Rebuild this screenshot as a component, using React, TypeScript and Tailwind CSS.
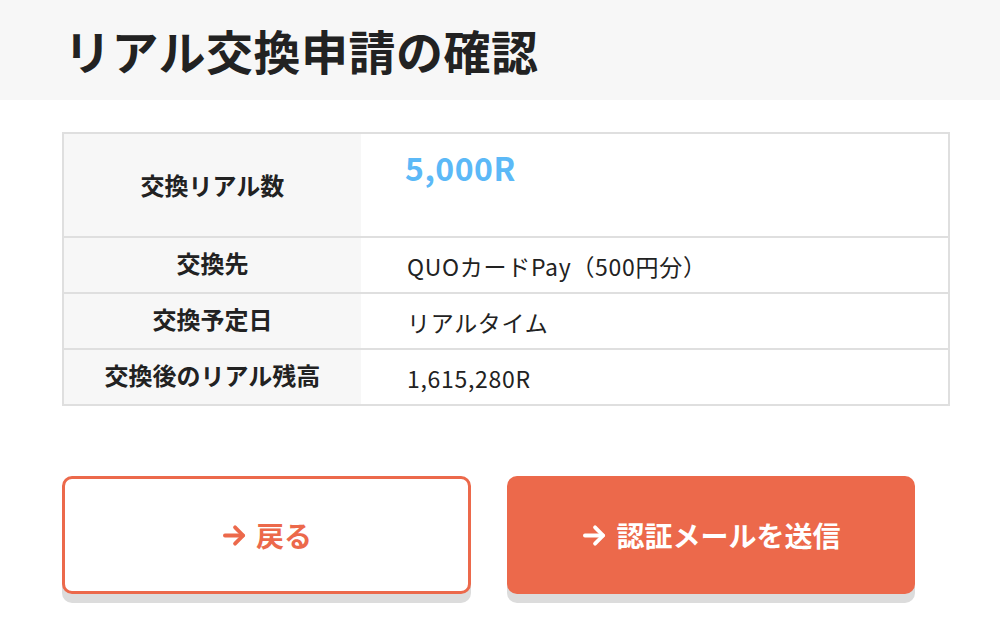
import React from "react";

const font = { fontFamily: '"Noto Sans CJK JP", "Noto Sans", sans-serif' };

function Arrow({ className }: { className?: string }) {
  return (
    <svg
      viewBox="0 0 24 24"
      className={className}
      fill="none"
      stroke="currentColor"
      strokeWidth={3.4}
      strokeLinecap="round"
      strokeLinejoin="round"
    >
      <path d="M3.5 12h16" />
      <path d="M12.5 4.8l7.2 7.2-7.2 7.2" />
    </svg>
  );
}

const rows = [
  { label: "交換先", value: "QUOカードPay（500円分）" },
  { label: "交換予定日", value: "リアルタイム" },
  { label: "交換後のリアル残高", value: "1,615,280R" },
];

export default function App() {
  return (
    <div className="w-[1000px] h-[639px] bg-white text-[#222]" style={font}>
      <div className="h-[100px] bg-[#f7f7f7] flex items-center pl-[64px]">
        <h1 className="text-[47px] font-bold leading-none tracking-[0.5px] pb-[2px]">リアル交換申請の確認</h1>
      </div>

      <div className="pl-[62px] pr-[50px] pt-[32px]">
        <div className="border-2 border-[#dfdfdf]">
          <div className="flex h-[102px]">
            <div className="w-[297px] bg-[#f7f7f7] flex items-center justify-center text-[24px] font-bold">
              交換リアル数
            </div>
            <div className="flex-1 pl-[44px] pt-[9px] text-[32px] font-bold text-[#5cb9f7] tracking-[0.5px] leading-normal">
              5,000R
            </div>
          </div>
          {rows.map((r) => (
            <div key={r.label} className="flex h-[56px] border-t-2 border-[#dfdfdf]">
              <div className="w-[297px] bg-[#f7f7f7] flex items-center justify-center text-[24px] font-bold pb-[4px]">
                {r.label}
              </div>
              <div className="flex-1 pl-[46px] flex items-center text-[23px] tracking-[0.7px] pt-[2px]">
                {r.value}
              </div>
            </div>
          ))}
        </div>

        <div className="flex gap-[36px] mt-[70px]">
          <button className="w-[409px] h-[118px] rounded-[10px] border-[3px] border-[#ec694b] bg-white text-[#ec694b] shadow-[0_9px_0_#dcdcdc] flex items-center justify-center gap-[8px] text-[28px] font-bold">
            <Arrow className="w-[27px] h-[27px]" />
            <span>戻る</span>
          </button>
          <button className="w-[408px] h-[118px] rounded-[10px] bg-[#ec694b] text-white shadow-[0_9px_0_#dcdcdc] flex items-center justify-center gap-[8px] text-[28px] font-bold">
            <Arrow className="w-[27px] h-[27px]" />
            <span>認証メールを送信</span>
          </button>
        </div>
      </div>
    </div>
  );
}
